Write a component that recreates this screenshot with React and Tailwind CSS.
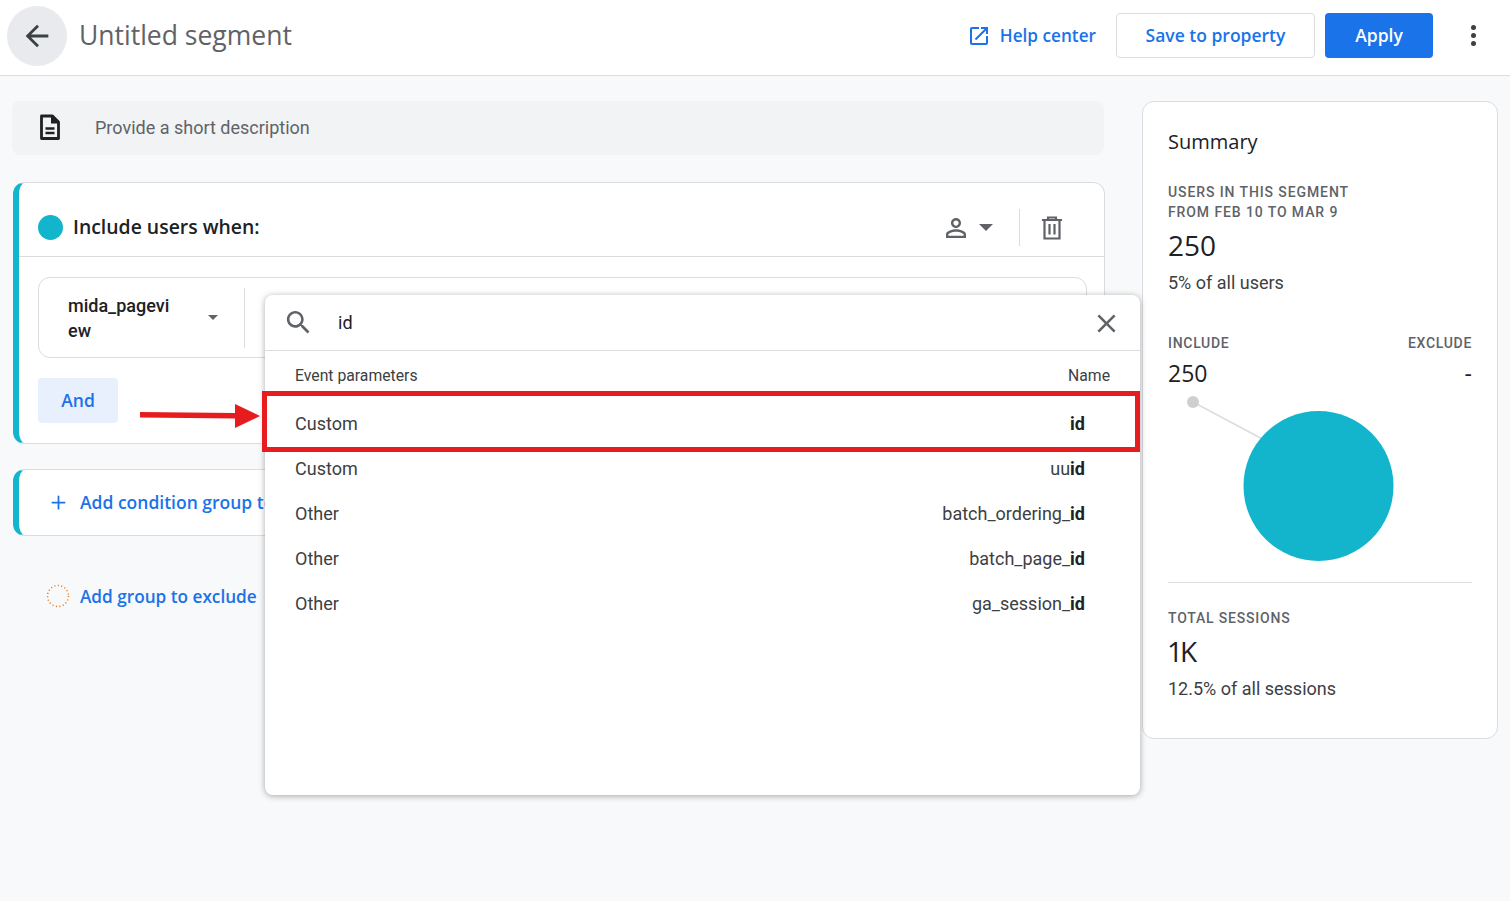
import React from 'react'
import { Plus } from 'lucide-react'

const rows = [
  { type: 'Custom', before: '', match: 'id' },
  { type: 'Custom', before: 'uu', match: 'id' },
  { type: 'Other', before: 'batch_ordering_', match: 'id' },
  { type: 'Other', before: 'batch_page_', match: 'id' },
  { type: 'Other', before: 'ga_session_', match: 'id' },
]

const heading = { fontFamily: '"Open Sans", Roboto, sans-serif' }

function Icon({ d, size, className }) {
  return (
    <svg width={size} height={size} viewBox="0 0 24 24" fill="currentColor" className={className}>
      <path d={d} />
    </svg>
  )
}

function Popover() {
  return (
    <div className="absolute left-[265px] top-[295px] w-[875px] h-[500px] bg-white rounded-lg shadow-[0_1px_6px_rgba(60,64,67,0.45)]">
      <div className="h-[56px] flex items-center border-b border-[#dadce0] pl-[18px] pr-[18px]">
        <Icon size={31} className="text-[#5f6368]" d="M15.500 14h-.79l-.28-.27C15.410 12.590 16 11.110 16 9.500 16 5.910 13.090 3 9.500 3S3 5.910 3 9.500 5.910 16 9.500 16c1.610 0 3.090-.59 4.230-1.570l.27.28v.79l5 4.990L20.490 19l-4.990-5zm-6 0C7.010 14 5 11.990 5 9.500S7.010 5 9.500 5 14 7.010 14 9.500 11.990 14 9.500 14z" />
        <span className="ml-[24px] text-[18px] text-[#202124]">id</span>
        <Icon size={31} className="ml-auto mt-[2px] text-[#5f6368]" d="M19 6.410L17.590 5 12 10.590 6.410 5 5 6.410 10.590 12 5 17.590 6.410 19 12 13.410 17.590 19 19 17.590 13.410 12z" />
      </div>
      <div className="h-[50px] flex items-center justify-between pl-[30px] pr-[30px] text-[15.750px] text-[#3c4043]">
        <span>Event parameters</span>
        <span>Name</span>
      </div>
      {rows.map((r, i) => (
        <div key={i} className="h-[45px] flex items-center justify-between pl-[30px] pr-[55px] text-[18px] text-[#3c4043]">
          <span>{r.type}</span>
          <span>{r.before}<b className="font-bold text-[#202124]">{r.match}</b></span>
        </div>
      ))}
    </div>
  )
}

function Callout() {
  return (
    <>
      <div className="absolute left-[262px] top-[391px] w-[878px] h-[61px] border-[5px] border-[#e71c1f]"></div>
      <svg className="absolute left-[140px] top-[403px]" width="122" height="28" viewBox="0 0 122 28">
        <path d="M0 9 L95 10 L95 1 L120 13 L95 25 L95 15.500 L0 14.500 Z" fill="#e71c1f" />
      </svg>
    </>
  )
}

function Summary() {
  return (
    <aside className="w-[356px] h-[638px] shrink-0 bg-white border border-[#dadce0] rounded-xl pt-[26px] px-[25px]">
      <h2 className="text-[20px] leading-[28px] font-medium text-[#202124]" style={heading}>Summary</h2>
      <p className="mt-[26px] text-[14px] leading-[20px] font-medium tracking-[0.9px] text-[#5f6368]">
        USERS IN THIS SEGMENT<br />FROM FEB 10 TO MAR 9
      </p>
      <div className="mt-[5px] text-[28px] leading-[36px] text-[#202124]" style={heading}>250</div>
      <div className="mt-[7px] text-[18px] leading-[26px] text-[#3c4043]">5% of all users</div>
      <div className="mt-[37px] flex justify-between text-[14px] leading-[20px] font-medium tracking-[0.7px] text-[#5f6368]">
        <span>INCLUDE</span>
        <span>EXCLUDE</span>
      </div>
      <div className="mt-[5px] flex justify-between text-[23px] leading-[30px] text-[#202124]" style={heading}>
        <span>250</span>
        <span>-</span>
      </div>
      <svg className="block mt-[7px]" width="304" height="176" viewBox="0 0 304 176">
        <line x1="25" y1="7" x2="100" y2="47" stroke="#dadce0" strokeWidth="1.5" />
        <circle cx="25" cy="7" r="6" fill="#cfcfcf" />
        <circle cx="150.500" cy="91" r="75" fill="#12b5cb" />
      </svg>
      <div className="mt-[11px] border-t border-[#dadce0]"></div>
      <div className="mt-[25px] text-[14px] leading-[20px] font-medium tracking-[0.8px] text-[#5f6368]">TOTAL SESSIONS</div>
      <div className="mt-[5px] text-[28px] leading-[36px] tracking-[-3px] -ml-px text-[#202124]" style={heading}>1K</div>
      <div className="mt-[7px] text-[18px] leading-[26px] text-[#3c4043]">12.5% of all sessions</div>
    </aside>
  )
}

export default function App() {
  return (
    <div className="relative w-[1510px] h-[901px] overflow-hidden bg-[#f8f9fa]" style={{ fontFamily: 'Roboto, sans-serif' }}>
      {/* Top bar */}
      <header className="h-[76px] bg-white border-b border-[#dadce0] flex items-center pl-[7px] pr-[34px] pb-[3px]">
        <div className="w-[60px] h-[60px] rounded-full bg-[#e8eaed] flex items-center justify-center">
          <Icon size={34} className="text-[#3c4043]" d="M20 11H7.830l5.590-5.590L12 4l-8 8 8 8 1.410-1.410L7.830 13H20v-2z" />
        </div>
        <h1 className="ml-[12px] text-[26.500px] text-[#5f6368]" style={heading}>Untitled segment</h1>
        <div className="ml-auto -mt-px flex items-center text-[#1a73e8] text-[17.500px] font-semibold" style={heading}>
          <Icon size={24} d="M19 19H5V5h7V3H5c-1.110 0-2 .9-2 2v14c0 1.100.89 2 2 2h14c1.100 0 2-.9 2-2v-7h-2v7zM14 3v2h3.590l-9.830 9.830 1.410 1.410L19 6.410V10h2V3h-7z" />
          <span className="ml-[9px] text-[17.200px]">Help center</span>
          <button className="ml-[20px] w-[199px] h-[45px] bg-white border border-[#dadce0] rounded">Save to property</button>
          <button className="ml-[10px] w-[108px] h-[45px] bg-[#1a73e8] text-white rounded">Apply</button>
          <div className="ml-[38px] flex flex-col gap-[3px]">
            <span className="w-[5px] h-[5px] rounded-full bg-[#3c4043]"></span>
            <span className="w-[5px] h-[5px] rounded-full bg-[#3c4043]"></span>
            <span className="w-[5px] h-[5px] rounded-full bg-[#3c4043]"></span>
          </div>
        </div>
      </header>

      <main className="flex pl-[13px] pt-[25px] gap-[37px]">
        <section className="w-[1092px]">
          <div className="-ml-px w-[1092px] h-[54px] bg-[#f1f3f4] rounded-lg flex items-center pl-[26px] pb-[2px] text-[18px] text-[#5f6368]">
            <svg width="24" height="26" viewBox="0 0 24 26" className="text-[#202124]">
              <path d="M3.500 2h11l6 6v16.500h-17z" fill="none" stroke="currentColor" strokeWidth="2.800" strokeLinejoin="round" />
              <path d="M14 2v6.500h6.500" fill="currentColor" stroke="currentColor" strokeWidth="2" />
              <path d="M7.500 14.500h9M7.500 19h9" stroke="currentColor" strokeWidth="2.400" />
            </svg>
            <span className="ml-[33px]">Provide a short description</span>
          </div>

          {/* Include group */}
          <div className="mt-[27px] h-[262px] bg-white border border-[#dadce0] border-l-[6px] border-l-[#12b5cb] rounded-xl">
            <div className="h-[74px] border-b border-[#dadce0] flex items-center pt-[16px] pl-[19px] pr-[41px]">
              <span className="w-[25px] h-[25px] rounded-full bg-[#12b5cb]"></span>
              <span className="ml-[10px] -mt-px text-[19.400px] font-semibold text-[#202124]" style={heading}>Include users when:</span>
              <Icon size={30} className="ml-auto text-[#5f6368]" d="M12 5.900c1.160 0 2.100.94 2.100 2.100s-.94 2.100-2.100 2.100S9.900 9.160 9.900 8s.94-2.100 2.100-2.100m0 9c2.970 0 6.100 1.460 6.100 2.100v1.100H5.900V17c0-.64 3.130-2.100 6.100-2.100M12 4C9.790 4 8 5.790 8 8s1.790 4 4 4 4-1.790 4-4-1.790-4-4-4zm0 9c-2.670 0-8 1.340-8 4v3h16v-3c0-2.660-5.330-4-8-4z" />
              <span className="ml-[8px] w-0 h-0 border-x-[7px] border-x-transparent border-t-[7px] border-t-[#5f6368]"></span>
              <span className="ml-[26px] w-px h-[37px] bg-[#dadce0]"></span>
              <svg width="22" height="24" viewBox="0 0 22 24" className="ml-[21px] text-[#5f6368]" fill="none" stroke="currentColor" strokeWidth="2.200">
                <path d="M1 4h20M7 4V1.500h8V4" />
                <path d="M3.500 4v18.500h15V4" />
                <path d="M8.500 8v10.500M13.500 8v10.500" />
              </svg>
            </div>
            <div className="mt-[20px] ml-[19px] mr-[17px] h-[81px] border border-[#dadce0] rounded-xl flex items-center">
              <div className="w-[206px] pl-[29px] pr-[26px] flex items-center justify-between border-r border-[#dadce0] h-[60px]">
                <span className="w-[110px] break-all text-[18px] leading-[25px] font-medium text-[#202124]">mida_pageview</span>
                <span className="w-0 h-0 border-x-[5px] border-x-transparent border-t-[5px] border-t-[#5f6368]"></span>
              </div>
            </div>
            <button className="mt-[20px] ml-[19px] w-[80px] h-[45px] bg-[#e8f0fe] rounded text-[#1a73e8] text-[17.500px] font-semibold" style={heading}>And</button>
          </div>

          {/* Add condition, the popover lies over the end of the label */}
          <div className="mt-[25px] h-[67px] bg-white border border-[#dadce0] border-l-[6px] border-l-[#12b5cb] rounded-xl flex items-center pl-[29px] text-[#1a73e8] text-[17.500px] font-semibold" style={heading}>
            <Plus size={21} strokeWidth={2} />
            <span className="ml-[11px] -mt-px">Add condition group to include</span>
          </div>

          <div className="mt-[47px] pl-[33px] flex items-center text-[#1a73e8] text-[17.200px] font-semibold" style={heading}>
            <svg width="24" height="24" viewBox="0 0 24 24" fill="none" stroke="#e8710a" strokeWidth="1.500" strokeDasharray="1 2.500">
              <circle cx="12" cy="12" r="10.500" />
            </svg>
            <span className="ml-[10px] mt-px">Add group to exclude</span>
          </div>
        </section>
        <Summary />
      </main>

      <Popover />
      <Callout />
    </div>
  )
}
